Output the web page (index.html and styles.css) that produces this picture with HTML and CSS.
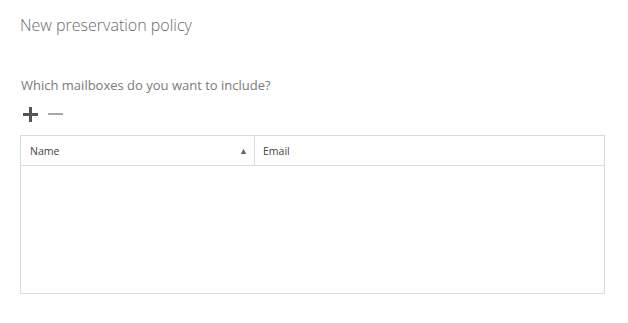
FILE: index.html
```html
<!DOCTYPE html>
<html lang="en">
<head>
<meta charset="UTF-8">
<meta name="viewport" content="width=device-width, initial-scale=1.0">
<title>New preservation policy</title>
<link rel="stylesheet" href="styles.css">
</head>
<body>
    <div class="page">
        <h1 class="title">New preservation policy</h1>
        <p class="question">Which mailboxes do you want to include?</p>
        <div class="toolbar">
            <button class="tool add" title="Add">
                <svg width="15" height="15" viewBox="0 0 15 15"><path d="M6 0h3v6h6v3H9v6H6V9H0V6h6z" fill="#555"/></svg>
            </button>
            <button class="tool remove" title="Remove">
                <svg width="15" height="15" viewBox="0 0 15 15"><rect x="0" y="6" width="15" height="2" fill="#a8a8a8"/></svg>
            </button>
        </div>
        <div class="grid">
            <div class="grid-head">
                <div class="col col-name">
                    <span>Name</span>
                    <span class="sort">&#9650;</span>
                </div>
                <div class="col col-email">
                    <span>Email</span>
                </div>
            </div>
            <div class="grid-body"></div>
        </div>
    </div>
</body>
</html>
```

FILE: styles.css
```css
body {
    margin: 0;
    background: #fff;
    font-family: "Open Sans", "Noto Sans", sans-serif;
    color: #666;
}
.page {
    padding: 14px 23px 0 20px;
}
.title {
    margin: 0;
    font-size: 16px;
    font-weight: 300;
    color: #6a6a6a;
    line-height: 22px;
}
.question {
    margin: 40px 0 0 1px;
    font-size: 13px;
    font-weight: 400;
    color: #7a7a7a;
    line-height: 18px;
}
.toolbar {
    display: flex;
    gap: 10px;
    margin: 13px 0 0 3px;
    height: 18px;
}
.tool {
    background: none;
    border: none;
    padding: 0;
    width: 15px;
    height: 15px;
    cursor: pointer;
}
.grid {
    margin-top: 10px;
    border: 1px solid #dadada;
    height: 157px;
    display: flex;
    flex-direction: column;
}
.grid-head {
    display: flex;
    height: 29px;
    border-bottom: 1px solid #dadada;
    font-size: 10.5px;
    color: #444;
}
.col {
    display: flex;
    align-items: center;
}
.col-name {
    width: 224px;
    padding: 0 0 0 9px;
    justify-content: space-between;
    border-right: 1px solid #dadada;
}
.col-email {
    flex: 1;
    padding-left: 8px;
}
.sort {
    font-size: 9px;
    color: #666;
    margin-right: 6px;
}
.grid-body {
    flex: 1;
}
```
